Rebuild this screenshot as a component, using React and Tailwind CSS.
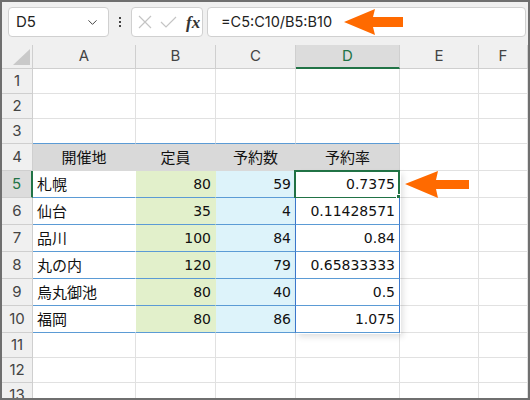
import React from "react";
import { ChevronDown } from "lucide-react";

const cols = ["A", "B", "C", "D", "E", "F"];
const colW = ["w-[103px]", "w-[80px]", "w-[80px]", "w-[104px]", "w-[79px]", "flex-1"];

const data = [
  ["札幌", "80", "59", "0.7375"],
  ["仙台", "35", "4", "0.11428571"],
  ["品川", "100", "84", "0.84"],
  ["丸の内", "120", "79", "0.65833333"],
  ["烏丸御池", "80", "40", "0.5"],
  ["福岡", "80", "86", "1.075"],
];

const rows = [1, 2, 3, 4, 5, 6, 7, 8, 9, 10, 11, 12, 13];

function rowH(r) {
  return r >= 4 && r <= 10 ? "h-[27px]" : "h-[25px]";
}

function cellClass(r, c) {
  if (r === 3 && c <= 3) return "bg-white border-r border-b border-r-[#e1e1e1] border-b-[#5b9bd5]";
  if (r === 4 && c <= 2) return "bg-[#d9d9d9] border-r border-b border-[#d9d9d9] justify-center font-['Noto_Sans_CJK_JP',sans-serif] text-[15px]";
  if (r === 4 && c === 3) return "bg-[#d9d9d9] border-r border-b border-r-[#d0d0d0] border-b-[#d9d9d9] justify-center font-['Noto_Sans_CJK_JP',sans-serif] text-[15px]";
  if (r >= 5 && r <= 10) {
    if (c === 0) return "bg-white border-r border-b border-r-white border-b-[#5b9bd5] justify-start font-['Noto_Sans_CJK_JP',sans-serif] text-[15px]";
    if (c === 1) return "bg-[#e2f0cb] border-r border-b border-r-[#e2f0cb] border-b-[#5b9bd5] justify-end font-['DejaVu_Sans',sans-serif] text-[14px]";
    if (c === 2) return "bg-[#ddf3fa] border-r border-b border-r-[#3d7ad0] border-b-[#5b9bd5] justify-end font-['DejaVu_Sans',sans-serif] text-[14px]";
    if (c === 3) return "bg-white border-r border-b border-r-[#3d7ad0] border-b-[#5b9bd5] justify-end font-['DejaVu_Sans',sans-serif] text-[14px]";
  }
  return "bg-white border-r border-b border-[#e1e1e1]";
}

function cellText(r, c) {
  if (r === 4 && c <= 3) return ["開催地", "定員", "予約数", "予約率"][c];
  if (r >= 5 && r <= 10 && c <= 3) return data[r - 5][c];
  return "";
}

export default function App() {
  return (
    <div className="relative w-[530px] h-[400px] overflow-hidden border-2 border-[#6f6f6f] bg-[#f0f0f0] font-['Noto_Sans',sans-serif] text-[#222]">
      {/* toolbar */}
      <div className="flex h-[43px] items-start pt-[5px] pl-[6px] pr-[2px]">
        <div className="flex h-[30px] w-[101px] items-center justify-between rounded-[4px] border border-[#d0d0d0] bg-white pl-[7px] pr-[8px] text-[15px]">
          <span className="font-['Inter',sans-serif] text-[15px] text-[#222]">D5</span>
          <ChevronDown size={15} strokeWidth={1.6} className="text-[#444]" />
        </div>
        <div className="flex h-[30px] w-[22px] flex-col items-center justify-center gap-[2px]">
          <span className="block h-[2px] w-[2px] bg-[#444]" />
          <span className="block h-[2px] w-[2px] bg-[#444]" />
          <span className="block h-[2px] w-[2px] bg-[#444]" />
        </div>
        <div className="flex h-[30px] w-[72px] items-center rounded-[4px] border border-[#d0d0d0] bg-white pl-[6px]">
          <svg width="14" height="14" viewBox="0 0 14 14">
            <path d="M1 1 L13 13 M13 1 L1 13" stroke="#c4c4c4" strokeWidth="1.2" fill="none" />
          </svg>
          <svg width="17" height="14" viewBox="0 0 17 14" className="ml-[8px]">
            <path d="M1 7 L6 12 L16 2" stroke="#c4c4c4" strokeWidth="1.2" fill="none" />
          </svg>
          <span className="ml-[9px] font-['Liberation_Serif',serif] text-[17px] italic font-bold leading-none text-[#333]">fx</span>
        </div>
        <div className="ml-[4px] flex h-[30px] flex-1 items-center rounded-[4px] border border-[#d0d0d0] bg-white pl-[13px]">
          <span className="font-['Inter',sans-serif] text-[14.5px] text-[#222]">=C5:C10/B5:B10</span>
        </div>
      </div>

      {/* column header */}
      <div className="flex h-[24px]">
        <div className="relative w-[31px] border-r border-b border-[#cfcfcf] bg-[#f0f0f0]">
          <svg width="18" height="17" viewBox="0 0 18 17" className="absolute left-[11px] top-[4px]">
            <polygon points="17,0 17,16 0,16" fill="#c9c9c9" />
          </svg>
        </div>
        {cols.map((c, i) => (
          <div
            key={c}
            className={
              colW[i] +
              " flex items-center justify-center text-[15px] font-['Inter',sans-serif] " +
              (c === "D"
                ? "bg-[#dcdcdc] border-r border-r-[#cfcfcf] border-b-2 border-b-[#217346] text-[#217346]"
                : "bg-[#f0f0f0] border-r border-b border-[#cfcfcf] text-[#444]")
            }
          >
            {c}
          </div>
        ))}
      </div>

      {/* rows */}
      {rows.map((r) => (
        <div key={r} className={"flex " + rowH(r)}>
          <div
            className={
              "flex w-[31px] items-center justify-center text-[15px] font-['Inter',sans-serif] border-b " +
              (r === 5
                ? "bg-[#dcdcdc] text-[#217346] border-r-2 border-r-[#217346] border-b-[#cfcfcf]"
                : "bg-[#f0f0f0] text-[#444] border-r border-[#cfcfcf]")
            }
          >
            {r}
          </div>
          {cols.map((c, i) => (
            <div
              key={c}
              className={colW[i] + " relative flex items-center px-[4px] text-[#111] " + cellClass(r, i)}
            >
              {cellText(r, i)}
              {r === 5 && i === 3 && (
                <>
                  <div className="pointer-events-none absolute -left-[2px] -top-[1px] h-[29px] w-[106px] border-2 border-[#217346]" />
                  <div className="absolute -bottom-[4px] -right-[4px] h-[7px] w-[7px] border border-white bg-[#217346]" />
                </>
              )}
            </div>
          ))}
        </div>
      ))}

      {/* spill range shadow */}
      <div className="pointer-events-none absolute left-[294px] top-[169px] h-[163px] w-[105px] shadow-[2px_3px_6px_rgba(0,0,0,0.12)]" />

      {/* arrows */}
      <svg
        width="530"
        height="400"
        viewBox="0 0 530 400"
        className="pointer-events-none absolute -left-[2px] -top-[2px]"
      >
        <polygon points="344,22 375,9 373,17 403,17 403,27 373,27 375,35" fill="#ff6a00" />
        <polygon points="405,184 438,171 436,180 469,180 469,189 436,189 438,198" fill="#ff6a00" />
      </svg>
    </div>
  );
}
